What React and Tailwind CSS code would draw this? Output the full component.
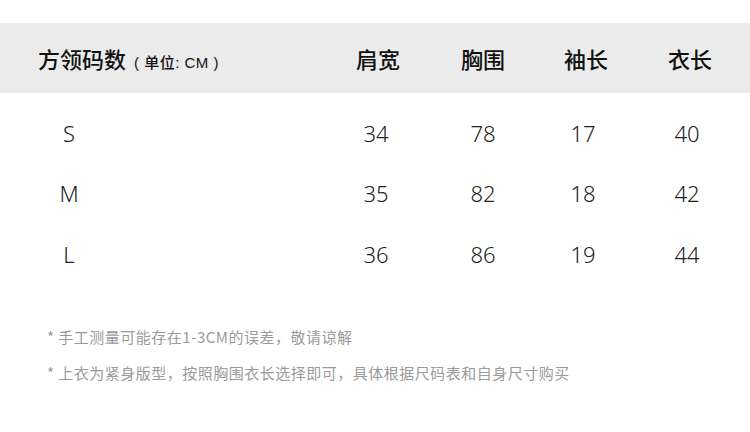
export default function App() {
  const cols = ["肩宽", "胸围", "袖长", "衣长"];
  const hWidths = ["w-[104px]", "w-[106px]", "w-[100px]", "w-[108px]"];
  const vWidths = ["w-[104px]", "w-[110px]", "w-[90px]", "w-[118px]"];
  const rows = [
    ["S", "34", "78", "17", "40"],
    ["M", "35", "82", "18", "42"],
    ["L", "36", "86", "19", "44"],
  ];
  const font = { fontFamily: '"Noto Sans CJK SC", "Noto Sans", sans-serif' };
  return (
    <div className="w-[750px] h-[432px] bg-white overflow-hidden" style={font}>
      <div className="h-[23px]" />
      <div className="h-[70px] bg-[#ebebeb] flex items-center text-[#111] pt-[1px]">
        <div className="w-[326px] pl-[38px] flex items-baseline">
          <span className="text-[22px] font-medium">方领码数</span>
          <span
            className="text-[15px] ml-[8px] font-medium tracking-[0.5px]"
            style={{ fontFamily: '"Liberation Sans", "Noto Sans CJK SC", sans-serif' }}
          >
            ( 单位: CM )
          </span>
        </div>
        {cols.map((c, i) => (
          <div key={c} className={`${hWidths[i]} text-center text-[22px] font-medium`}>{c}</div>
        ))}
      </div>
      <div className="pt-[10px]">
        {rows.map((r) => (
          <div
            key={r[0]}
            className="h-[60.5px] flex items-center text-[22px] font-light text-[#222]"
            style={{ fontFamily: '"Noto Sans", sans-serif' }}
          >
            <div className="w-[324px] pl-[38px]">
              <span className="inline-block w-[62px] text-center">{r[0]}</span>
            </div>
            {r.slice(1).map((v, i) => (
              <div key={i} className={`${vWidths[i]} text-center`}>{v}</div>
            ))}
          </div>
        ))}
      </div>
      <div className="pl-[47px] pt-[42px] text-[15px] leading-[20px] tracking-[0.5px] text-[#9a9a9a] flex flex-col gap-[16px]">
        <div>* 手工测量可能存在1-3CM的误差，敬请谅解</div>
        <div>* 上衣为紧身版型，按照胸围衣长选择即可，具体根据尺码表和自身尺寸购买</div>
      </div>
    </div>
  );
}
